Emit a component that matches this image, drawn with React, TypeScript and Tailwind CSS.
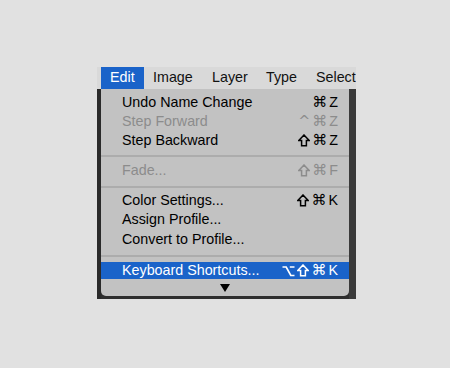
import React from "react";

const font = { fontFamily: '"Liberation Sans", "DejaVu Sans", Arial, sans-serif' };

function Shift({ c }: { c: string }) {
  return (
    <svg width="12" height="13" viewBox="0 0 12 13" className="block">
      <path d="M6 1 L11.2 6.6 H8.4 V11.8 H3.6 V6.6 H0.8 Z" fill="none" stroke={c} strokeWidth="1.5" strokeLinejoin="miter" />
    </svg>
  );
}

function Opt({ c }: { c: string }) {
  return (
    <svg width="13" height="12" viewBox="0 0 13 12" className="block">
      <path d="M0.5 2 H4.2 L8.8 10.5 H12.5 M7.8 2 H12.5" fill="none" stroke={c} strokeWidth="1.7" />
    </svg>
  );
}

function Keys({ keys, disabled, light }: { keys: string[]; disabled?: boolean; light?: boolean }) {
  const c = light ? "#ffffff" : disabled ? "#8c8c8c" : "#000000";
  return (
    <div className="flex items-center gap-[2px]" style={{ color: c }}>
      {keys.map((k, i) =>
        k === "⇧" ? (
          <Shift key={i} c={c} />
        ) : k === "⌥" ? (
          <Opt key={i} c={c} />
        ) : (
          <span
            key={i}
            className={k === "⌘" ? "leading-none text-[15px]" : "leading-none"}
            style={{ fontFamily: /[A-Z]/.test(k) ? '"Liberation Sans", sans-serif' : '"DejaVu Sans", sans-serif' }}
          >
            {k}
          </span>
        )
      )}
    </div>
  );
}

function Row({ label, keys, disabled, h = "h-[19px]" }: { label: string; keys?: string[]; disabled?: boolean; h?: string }) {
  return (
    <div className={`flex ${h} items-center justify-between pl-[21px] pr-[11px]`}>
      <span className={disabled ? "text-[#8c8c8c]" : "text-[#000000]"}>{label}</span>
      {keys && <Keys keys={keys} disabled={disabled} />}
    </div>
  );
}

function Sep({ h, top }: { h: string; top: string }) {
  return (
    <div className={`${h} ${top}`}>
      <div className="h-[2px] bg-[#acacac]" />
    </div>
  );
}

export default function App() {
  return (
    <div className="w-[450px] h-[368px] bg-[#e1e1e1] pt-[67px] pl-[97px]" style={font}>
      <div className="w-[259px] h-[232px] flex flex-col bg-[#2e2e2e] overflow-hidden text-[14.3px]">
        <div className="h-[22px] bg-[#d9d9d9] flex items-center pl-[4px] text-[#111111] whitespace-nowrap shrink-0">
          <div className="h-[22px] w-[43px] pl-[9px] bg-[#1a63c9] text-white flex items-center">Edit</div>
          <div className="w-[58px] pl-[9px]">Image</div>
          <div className="w-[54px] pl-[10px]">Layer</div>
          <div className="w-[50px] pl-[10px]">Type</div>
          <div className="pl-[10px]">Select</div>
        </div>
        <div className="flex flex-1">
          <div className="w-[4px] bg-[#2a2a2a]" />
          <div className="w-[248px] h-[207px] bg-[#c2c2c2] rounded-b-[5px] pt-[4px] flex flex-col">
            <Row label="Undo Name Change" keys={["⌘", "Z"]} />
            <Row label="Step Forward" keys={["^", "⌘", "Z"]} disabled />
            <Row label="Step Backward" keys={["⇧", "⌘", "Z"]} />
            <Sep h="h-[11px]" top="pt-[5px]" />
            <Row label="Fade..." keys={["⇧", "⌘", "F"]} disabled />
            <Sep h="h-[11px]" top="pt-[6px]" />
            <Row label="Color Settings..." keys={["⇧", "⌘", "K"]} />
            <Row label="Assign Profile..." h="h-[20px]" />
            <Row label="Convert to Profile..." />
            <Sep h="h-[13px]" top="pt-[6px]" />
            <div className="flex h-[17px] items-center justify-between pl-[21px] pr-[11px] bg-[#1a63c9] text-white">
              <span>Keyboard Shortcuts...</span>
              <Keys keys={["⌥", "⇧", "⌘", "K"]} light />
            </div>
            <div className="flex flex-1 items-start justify-center pt-[5px] pr-[1px]">
              <svg width="10" height="8" viewBox="0 0 10 8">
                <polygon points="0,0 10,0 5,8" fill="#000" />
              </svg>
            </div>
          </div>
          <div className="flex-1 bg-[#3a3a3a]" />
        </div>
      </div>
    </div>
  );
}
